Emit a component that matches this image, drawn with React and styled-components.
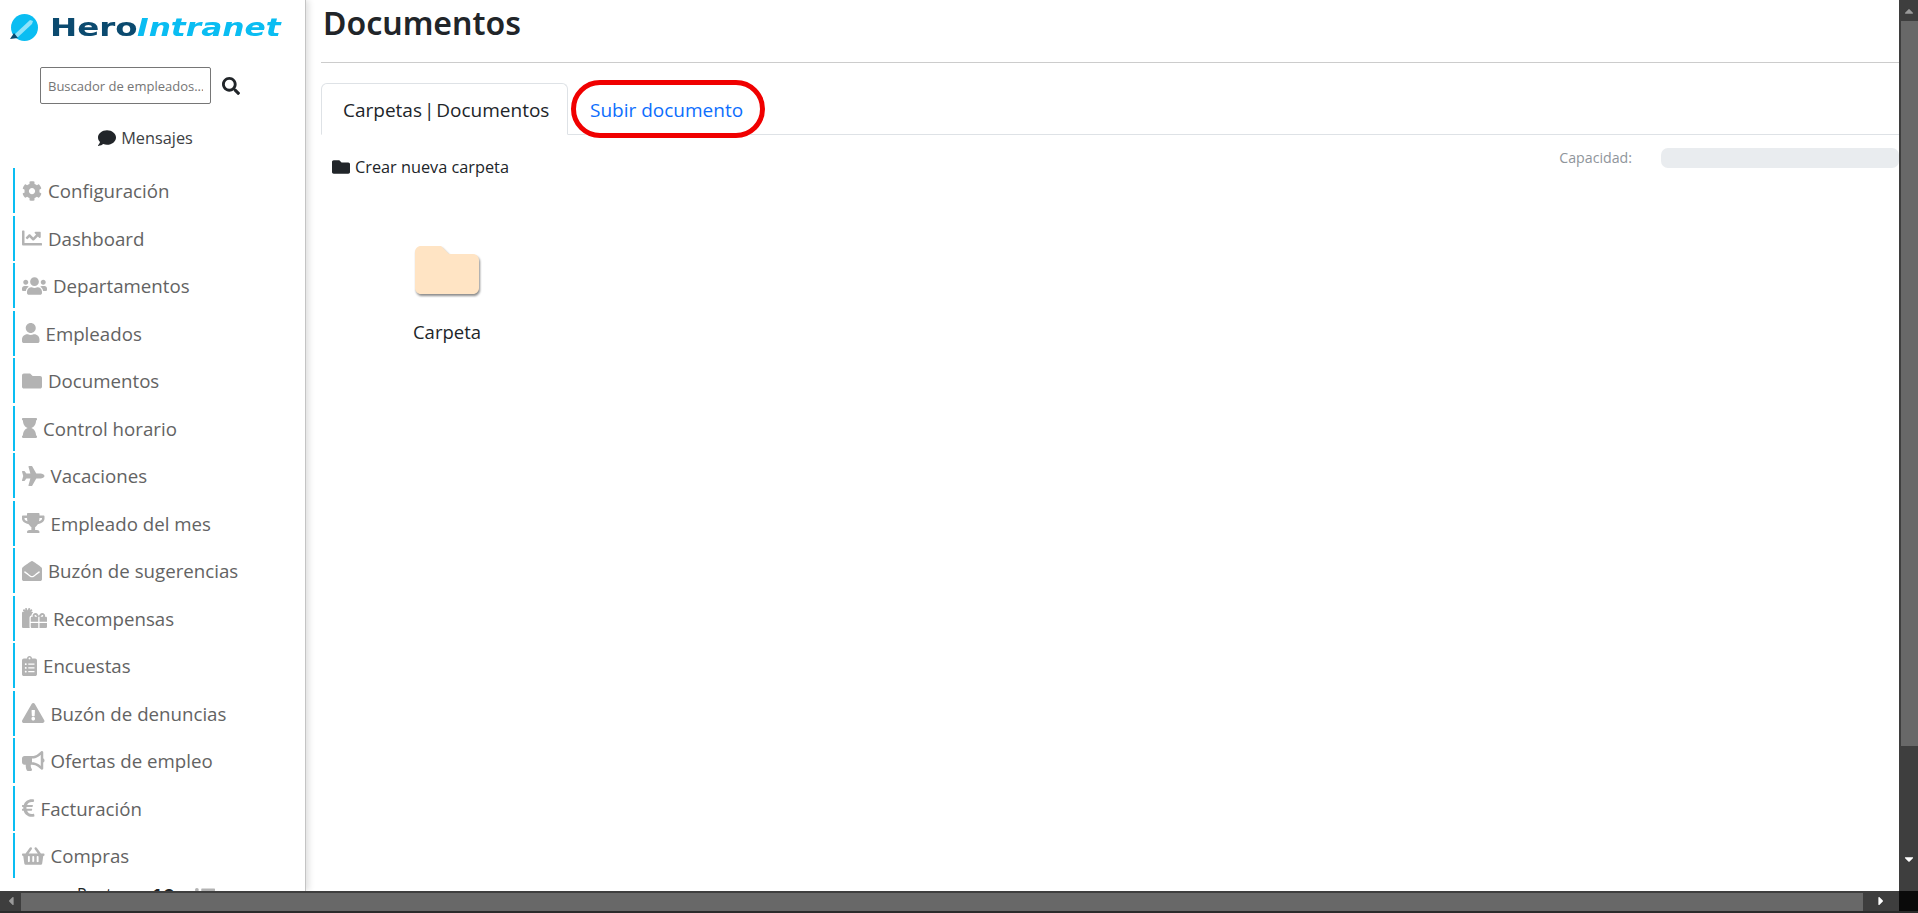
import React from 'react'
import styled, { createGlobalStyle } from 'styled-components'
import {
  FaCog, FaChartLine, FaUsers, FaUser, FaFolder, FaHourglass, FaPlane, FaTrophy,
  FaEnvelopeOpen, FaGifts, FaClipboardList, FaExclamationTriangle, FaBullhorn,
  FaEuroSign, FaShoppingBasket, FaComment, FaSearch, FaCaretUp, FaCaretDown,
  FaCaretLeft, FaCaretRight, FaListUl
} from 'react-icons/fa'

const GlobalStyle = createGlobalStyle`
  html, body { margin: 0; padding: 0; height: 100%; overflow: hidden; background: #fff; }
  * { box-sizing: border-box; }
`

const Page = styled.div`
  width: 1918px;
  height: 913px;
  display: grid;
  grid-template-columns: 1fr 19px;
  grid-template-rows: 891px 20px 2px;
  font-family: "Open Sans", "Noto Sans", sans-serif;
  color: #212529;
`

const Content = styled.div`
  display: flex;
  min-width: 0;
  overflow: hidden;
`

const Sidebar = styled.aside`
  width: 306px;
  flex: none;
  border-right: 1px solid #c4c4c4;
  box-shadow: 3px 0 6px rgba(0, 0, 0, 0.12);
  padding-top: 14px;
  overflow: hidden;
  display: flex;
  flex-direction: column;
`

const Logo = styled.div`
  display: flex;
  align-items: center;
  height: 27px;
  padding-left: 9px;
  white-space: nowrap;
  font-family: "DejaVu Sans", sans-serif;
  font-size: 25px;
  line-height: 27px;
  font-weight: 700;
`

const LogoDark = styled.span`
  display: inline-block;
  width: 87px;
  margin-left: 12px;
  color: #0b4a6f;
  transform: scaleX(1.3);
  transform-origin: left center;
`

const LogoLight = styled.span`
  display: inline-block;
  width: 145px;
  font-style: italic;
  color: #0abdf2;
  transform: scaleX(1.25);
  transform-origin: left center;
`

const SearchRow = styled.div`
  display: flex;
  align-items: center;
  margin: 26px 0 0 40px;
  gap: 11px;
  color: #212529;
  font-size: 18px;
`

const SearchInput = styled.input`
  width: 171px;
  height: 37px;
  border: 1px solid #767676;
  border-radius: 2px;
  padding: 0 7px;
  font-family: inherit;
  font-size: 13px;
  &::placeholder { color: #757575; opacity: 1; }
`

const Messages = styled.div`
  display: flex;
  justify-content: center;
  align-items: center;
  gap: 5px;
  margin-top: 23px;
  height: 28px;
  padding-right: 14px;
  font-size: 16.3px;
  color: #3c4043;
  svg { color: #212529; font-size: 18px; flex: none; }
`

const Menu = styled.nav`
  margin: 19px 0 0 13px;
  display: flex;
  flex-direction: column;
  gap: 2.5px;
`

const MenuItem = styled.a`
  height: 45px;
  flex: none;
  border-left: 2px solid #0abdf2;
  padding-left: 7px;
  display: flex;
  align-items: center;
  gap: 6px;
  font-size: 18.7px;
  color: #636363;
  white-space: nowrap;
  svg {
    color: #b3b3b3;
    width: ${p => p.$iconWidth}px;
    height: 20px;
    flex: none;
  }
`

const PointsRow = styled.div`
  display: flex;
  align-items: flex-start;
  margin: 5px 0 0 77px;
  height: 30px;
  font-size: 16px;
  line-height: 22px;
  color: #212529;
`

const PointsValue = styled.b`
  margin-left: 21px;
  font-size: 22px;
  line-height: 24px;
`

const PointsIcon = styled.span`
  margin: 3px 0 0 20px;
  color: #b3b3b3;
  font-size: 20px;
  line-height: 20px;
`

const Main = styled.main`
  flex: 1;
  min-width: 0;
  padding: 0 0 0 15px;
`

const Title = styled.h1`
  margin: 0;
  height: 63px;
  padding: 3px 0 0 2px;
  font-size: 32px;
  line-height: 40px;
  font-weight: 600;
  color: #212529;
  border-bottom: 1px solid #ccc;
  font-family: "Noto Sans", "Open Sans", sans-serif;
`

const Tabs = styled.div`
  margin-top: 20px;
  height: 52px;
  display: flex;
  border-bottom: 1px solid #dee2e6;
  font-size: 19px;
`

const Tab = styled.div`
  position: relative;
  height: 52px;
  width: ${p => p.$width}px;
  padding: 2px 0 0 21px;
  display: flex;
  align-items: center;
  white-space: nowrap;
  word-spacing: ${p => (p.$active ? '-3px' : '0')};
  color: ${p => (p.$active ? '#212529' : '#0d6efd')};
  background: ${p => (p.$active ? '#fff' : 'transparent')};
  border: 1px solid ${p => (p.$active ? '#dee2e6' : 'transparent')};
  border-bottom-color: ${p => (p.$active ? '#fff' : 'transparent')};
  border-radius: 6px 6px 0 0;
`

const Highlight = styled.span`
  position: absolute;
  left: 2px;
  top: -4px;
  width: 194px;
  height: 58px;
  border: 5px solid #f00000;
  border-radius: 29px;
`

const Toolbar = styled.div`
  display: flex;
  justify-content: space-between;
  padding: 12px 0 0 11px;
`

const NewFolder = styled.div`
  display: flex;
  align-items: center;
  gap: 5px;
  margin-top: 9px;
  font-size: 16.3px;
  color: #212529;
  svg { font-size: 18px; }
`

const Capacity = styled.div`
  display: flex;
  align-items: center;
  height: 21px;
  font-size: 14.2px;
  color: #8f959b;
`

const Bar = styled.div`
  width: 238px;
  height: 20px;
  margin-left: 29px;
  border-radius: 7px;
  background: #e9ecef;
`

const FolderCard = styled.div`
  width: 110px;
  margin: 60px 0 0 71px;
  display: flex;
  flex-direction: column;
  align-items: center;
  font-size: 18.5px;
  color: #212529;
  svg {
    font-size: 64px;
    color: #ffe4c4;
    filter: drop-shadow(1px 2px 1px rgba(0, 0, 0, 0.45));
  }
`

const FolderName = styled.span`
  margin-top: 17px;
`

const VScroll = styled.div`
  background: #3e3e3e;
  display: flex;
  flex-direction: column;
  align-items: center;
  color: #fff;
  font-size: 14px;
`

const VThumb = styled.div`
  width: 17px;
  height: 725px;
  margin-left: 2px;
  background: #686868;
`

const ArrowBox = styled.div`
  height: ${p => p.$size || 21}px;
  width: ${p => p.$wide || 'auto'};
  flex: none;
  display: flex;
  align-items: ${p => (p.$end ? 'flex-end' : 'center')};
  justify-content: center;
  padding-bottom: ${p => (p.$end ? '4px' : '0')};
  color: ${p => p.$color || '#9a9a9a'};
`

const HScroll = styled.div`
  background: #3e3e3e;
  display: flex;
  align-items: center;
  font-size: 14px;
`

const HThumb = styled.div`
  width: 1842px;
  height: 18px;
  margin-top: 1px;
  background: #686868;
`

const Corner = styled.div`
  background: #0a0a0a;
`

const Strip = styled.div`
  grid-column: 1 / -1;
  background: #2b2b2b;
`

const items = [
  [FaCog, 'Configuración', 20],
  [FaChartLine, 'Dashboard', 20],
  [FaUsers, 'Departamentos', 25],
  [FaUser, 'Empleados', 17.5],
  [FaFolder, 'Documentos', 20],
  [FaHourglass, 'Control horario', 15],
  [FaPlane, 'Vacaciones', 22.5],
  [FaTrophy, 'Empleado del mes', 22.5],
  [FaEnvelopeOpen, 'Buzón de sugerencias', 20],
  [FaGifts, 'Recompensas', 25],
  [FaClipboardList, 'Encuestas', 15],
  [FaExclamationTriangle, 'Buzón de denuncias', 22.5],
  [FaBullhorn, 'Ofertas de empleo', 22.5],
  [FaEuroSign, 'Facturación', 12.5],
  [FaShoppingBasket, 'Compras', 22.5]
]

function LogoMark() {
  return (
    <svg width="29" height="27" viewBox="0 0 29 27">
      <circle cx="15.5" cy="13.5" r="13.5" fill="#0abdf2" />
      <path d="M5 21 L21 6 L24 7 L23 10 L8 24 Z" fill="#8fe3fa" />
      <path d="M1 25 L5 19 L9 24 Z" fill="#0b4a6f" />
    </svg>
  )
}

export default function App() {
  return (
    <Page>
      <GlobalStyle />
      <Content>
        <Sidebar>
          <Logo>
            <LogoMark />
            <LogoDark>Hero</LogoDark>
            <LogoLight>Intranet</LogoLight>
          </Logo>
          <SearchRow>
            <SearchInput placeholder="Buscador de empleados..." />
            <FaSearch />
          </SearchRow>
          <Messages>
            <FaComment />
            Mensajes
          </Messages>
          <Menu>
            {items.map(([Icon, label, iconWidth]) => (
              <MenuItem key={label} $iconWidth={iconWidth}>
                <Icon />
                {label}
              </MenuItem>
            ))}
          </Menu>
          <PointsRow>
            Puntos
            <PointsValue>10</PointsValue>
            <PointsIcon><FaListUl /></PointsIcon>
          </PointsRow>
        </Sidebar>
        <Main>
          <Title>Documentos</Title>
          <Tabs>
            <Tab $active $width={247}>Carpetas | Documentos</Tab>
            <Tab $width={200}>
              Subir documento
              <Highlight />
            </Tab>
          </Tabs>
          <Toolbar>
            <NewFolder>
              <FaFolder />
              Crear nueva carpeta
            </NewFolder>
            <Capacity>
              Capacidad:
              <Bar />
            </Capacity>
          </Toolbar>
          <FolderCard>
            <FaFolder />
            <FolderName>Carpeta</FolderName>
          </FolderCard>
        </Main>
      </Content>
      <VScroll>
        <ArrowBox><FaCaretUp /></ArrowBox>
        <VThumb />
        <ArrowBox $size={124} $end $color="#fff"><FaCaretDown /></ArrowBox>
      </VScroll>
      <HScroll>
        <ArrowBox $wide="21px"><FaCaretLeft /></ArrowBox>
        <HThumb />
        <ArrowBox $wide="36px" $color="#fff"><FaCaretRight /></ArrowBox>
      </HScroll>
      <Corner />
      <Strip />
    </Page>
  )
}
